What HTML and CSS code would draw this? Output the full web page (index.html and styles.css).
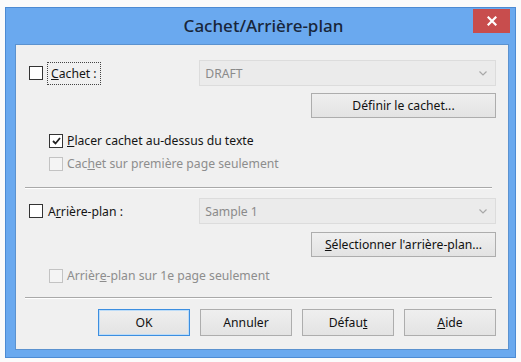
FILE: index.html
```html
<!DOCTYPE html>
<html lang="fr">
<head>
<meta charset="utf-8">
<title>Cachet/Arrière-plan</title>
<link rel="stylesheet" href="styles.css">
</head>
<body>
<div class="window">
  <div class="titlebar">
    <div class="title">Cachet/Arrière-plan</div>
    <div class="close"><svg width="10" height="10" viewBox="0 0 10 10"><path d="M1.5 1.5 L8.5 8.5 M8.5 1.5 L1.5 8.5" stroke="#fff" stroke-width="2.2" stroke-linecap="square"/></svg></div>
  </div>
  <div class="content">
    <div class="row-top">
      <div class="lead">
        <span class="cb"></span>
        <span class="label focus"><u>C</u>achet :</span>
      </div>
      <div class="combo"><span>DRAFT</span><svg class="chev" width="8" height="5" viewBox="0 0 8 5"><path d="M0.5 0.5 L4 4 L7.5 0.5" fill="none" stroke="#a8a8a8" stroke-width="1.2"/></svg></div>
    </div>
    <div class="btn-row"><button class="btn wide">Déf<u>i</u>nir le cachet...</button></div>
    <div class="opts">
      <div class="opt"><span class="cb checked"><svg width="9" height="8" viewBox="0 0 9 8"><path d="M1 4 L3.5 6.5 L8 1" fill="none" stroke="#222" stroke-width="1.8"/></svg></span><span class="label"><u>P</u>lacer cachet au-dessus du texte</span></div>
      <div class="opt disabled"><span class="cb"></span><span class="label">Cac<u>h</u>et sur première page seulement</span></div>
    </div>
    <div class="sep sep1"></div>
    <div class="row-top row2">
      <div class="lead">
        <span class="cb"></span>
        <span class="label">A<u>r</u>rière-plan :</span>
      </div>
      <div class="combo"><span>Sample 1</span><svg class="chev" width="8" height="5" viewBox="0 0 8 5"><path d="M0.5 0.5 L4 4 L7.5 0.5" fill="none" stroke="#a8a8a8" stroke-width="1.2"/></svg></div>
    </div>
    <div class="btn-row"><button class="btn wide"><u>S</u>électionner l'arrière-plan...</button></div>
    <div class="opts opts2">
      <div class="opt disabled"><span class="cb"></span><span class="label">Arrièr<u>e</u>-plan sur 1e page seulement</span></div>
    </div>
    <div class="sep sep2"></div>
    <div class="actions">
      <button class="btn act default">OK</button>
      <button class="btn act">Annuler</button>
      <button class="btn act">Défau<u>t</u></button>
      <button class="btn act"><u>A</u>ide</button>
    </div>
  </div>
</div>
</body>
</html>
```
FILE: styles.css
```css
html, body {
  margin: 0;
  padding: 0;
  background: #fbfbfb;
}
body {
  padding: 7px 0 0 5px;
  font-family: "Noto Sans", "DejaVu Sans", sans-serif;
  font-size: 12.2px;
  color: #141414;
}
.window {
  box-sizing: border-box;
  width: 511px;
  height: 351px;
  background: #6aa9ef;
  border: 1px solid #4d8bd3;
  display: flex;
  flex-direction: column;
  padding: 0 6px 7px 9px;
}
.titlebar {
  height: 36px;
  display: grid;
  grid-template-columns: 1fr auto 1fr;
  margin-right: -6px;
}
.title {
  grid-column: 2;
  align-self: center;
  font-size: 17px;
  font-weight: 500;
  color: #18263a;
  padding-bottom: 2px;
  margin-left: -3px;
}
.close {
  grid-column: 3;
  justify-self: end;
  align-self: start;
  margin-top: 1px;
  margin-right: 5px;
  width: 37px;
  height: 24px;
  background: #c84d4d;
  display: flex;
  align-items: center;
  justify-content: center;
}
.content {
  flex: 1;
  background: #f0f0f0;
  border: 1px solid #5b92cf;
  padding: 15px 12px 0 13px;
  display: flex;
  flex-direction: column;
}
.row-top {
  display: flex;
  align-items: center;
  height: 26px;
}
.row2 { margin-top: 9px; }
.lead {
  width: 171px;
  display: flex;
  align-items: center;
}
.cb {
  box-sizing: border-box;
  width: 14px;
  height: 14px;
  border: 1px solid #333;
  background: #fff;
  display: inline-flex;
  align-items: center;
  justify-content: center;
  flex: none;
}
.label { margin-left: 5px; white-space: nowrap; }
.focus {
  outline: 1px dotted #444;
  outline-offset: 0;
  padding: 2px 3px;
  margin-left: 5px;
}
.combo {
  box-sizing: border-box;
  width: 298px;
  height: 26px;
  background: #ebebeb;
  border: 1px solid #dcdcdc;
  display: flex;
  align-items: center;
  justify-content: space-between;
  padding: 0 8px 0 5px;
  color: #8a8a8a;
}
.btn-row {
  display: flex;
  justify-content: flex-end;
  margin-top: 7px;
}
.row2 + .btn-row { margin-top: 8px; }
.btn {
  box-sizing: border-box;
  font: inherit;
  color: #111;
  height: 25px;
  background: linear-gradient(#efefef, #e3e3e3);
  border: 1px solid #adadad;
  padding: 0;
  white-space: nowrap;
}
.wide { width: 185px; }
.opts {
  margin-top: 11px;
  padding-left: 20px;
  display: flex;
  flex-direction: column;
}
.opts2 { margin-top: 7px; }
.opt {
  height: 23px;
  display: flex;
  align-items: center;
}
.opt .label { margin-left: 4px; }
.cb.checked { border-color: #333; }
.disabled { color: #8d8d8d; }
.disabled .cb { border-color: #c3c3c3; background: #f4f4f4; }
.sep {
  height: 1px;
  background: #a9a9a9;
  border-bottom: 1px solid #fff;
  margin: 0 4px 0 -4px;
}
.sep1 { margin-top: 12px; }
.sep2 { margin-top: 10px; }
.actions {
  margin-top: 10px;
  display: flex;
  justify-content: flex-end;
  gap: 10px;
}
.act { width: 92px; height: 27px; }
.default {
  border: 1px solid #3c8ee0;
  box-shadow: inset 0 0 0 1px #bcdcf8;
}
```
